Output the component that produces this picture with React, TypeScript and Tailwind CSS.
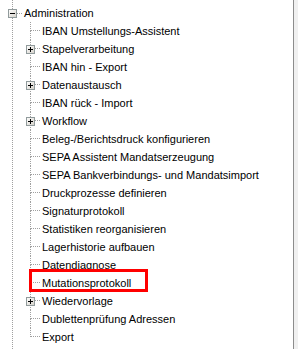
import React from "react";

type Item = { label: string; expandable?: boolean; marked?: boolean };

const children: Item[] = [
  { label: "IBAN Umstellungs-Assistent" },
  { label: "Stapelverarbeitung", expandable: true },
  { label: "IBAN hin - Export" },
  { label: "Datenaustausch", expandable: true },
  { label: "IBAN rück - Import" },
  { label: "Workflow", expandable: true },
  { label: "Beleg-/Berichtsdruck konfigurieren" },
  { label: "SEPA Assistent Mandatserzeugung" },
  { label: "SEPA Bankverbindungs- und Mandatsimport" },
  { label: "Druckprozesse definieren" },
  { label: "Signaturprotokoll" },
  { label: "Statistiken reorganisieren" },
  { label: "Lagerhistorie aufbauen" },
  { label: "Datendiagnose" },
  { label: "Mutationsprotokoll", marked: true },
  { label: "Wiedervorlage", expandable: true },
  { label: "Dublettenprüfung Adressen" },
  { label: "Export" },
];

// small +/- box of the classic windows tree view
const ExpandBox = ({ open }: { open?: boolean }) => (
  <svg width="9" height="9" viewBox="0 0 9 9" shapeRendering="crispEdges" className="block shrink-0">
    <defs>
      <linearGradient id="boxfill" x1="0" y1="0" x2="1" y2="1">
        <stop offset="0" stopColor="#ffffff" />
        <stop offset="1" stopColor="#d4d0c8" />
      </linearGradient>
    </defs>
    <rect x="0.5" y="0.5" width="8" height="8" fill="url(#boxfill)" stroke="#919b9c" />
    <path d="M2 4.5h5" stroke="#000" />
    {!open && <path d="M4.5 2v5" stroke="#000" />}
  </svg>
);

const TreeRow = ({ item, last }: { item: Item; last: boolean }) => (
  <div className="relative flex h-[18px] items-center">
    <div className="flex h-full w-[10px] shrink-0 flex-col">
      <div className="h-[9px] border-b border-l border-dotted border-[#a0a0a0]" />
      <div className={last ? "flex-1" : "flex-1 border-l border-dotted border-[#a0a0a0]"} />
    </div>
    {item.expandable && (
      <div className="-ml-[14px] mr-[5px]">
        <ExpandBox />
      </div>
    )}
    <span className="ml-[2px] whitespace-nowrap">{item.label}</span>
    {item.marked && (
      <div className="pointer-events-none absolute -left-[1px] -top-[5px] h-[23px] w-[119px] border-[3px] border-[#ff0000]" />
    )}
  </div>
);

export default function App() {
  return (
    <div className="flex h-[349px] w-[298px] overflow-hidden bg-white font-['Liberation_Sans',Arial,sans-serif] text-[11px] leading-none text-black">
      <div className="flex-1 overflow-hidden">
        <div className="ml-[12px] h-full border-l border-dotted border-[#a0a0a0] pt-[4px]">
          <div className="flex h-[18px] items-center">
            <div className="-ml-[5px]">
              <ExpandBox open />
            </div>
            <div className="w-[5px] border-t border-dotted border-[#a0a0a0]" />
            <span className="ml-[2px]">Administration</span>
          </div>
          <div className="ml-[17px]">
            {children.map((c, i) => (
              <TreeRow key={c.label} item={c} last={i === children.length - 1} />
            ))}
          </div>
        </div>
      </div>
      <div className="w-px bg-[#8c8c8c]" />
      <div className="w-[4px] bg-[#f0f0f0]" />
    </div>
  );
}
